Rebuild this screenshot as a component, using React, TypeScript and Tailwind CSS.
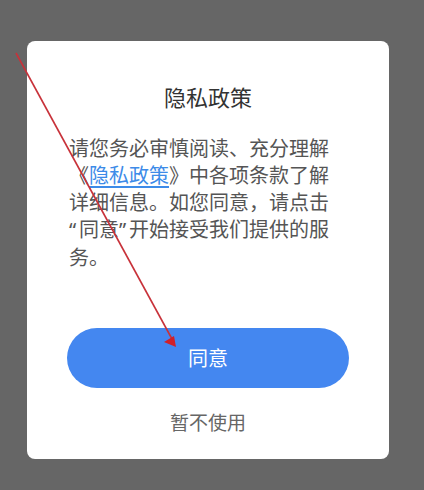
export default function App() {
    return (
        <div className="relative w-[424px] h-[490px] bg-[#666666] pt-[41px] pl-[27px] font-['Noto_Sans_CJK_SC',sans-serif] overflow-hidden">
            <div className="w-[362px] h-[418px] bg-white rounded-lg flex flex-col pt-[40px]">
                <h1 className="text-[22px] leading-[30px] text-[#333333] text-center">隐私政策</h1>
                <div className="mt-[23px] ml-[42px] w-[270px] text-[20px] leading-[27px] text-[#555555] whitespace-nowrap">
                    <p>请您务必审慎阅读、充分理解</p>
                    <p>《<span className="text-[#3d8be8] underline underline-offset-[3px]">隐私政策</span>》中各项条款了解</p>
                    <p>详细信息。如您同意，请点击</p>
                    <p>
                        <span className="font-['Noto_Sans',sans-serif] inline-block w-[10px]">“</span>同意<span className="font-['Noto_Sans',sans-serif] inline-block w-[10px]">”</span>开始接受我们提供的服
                    </p>
                    <p>务。</p>
                </div>
                <button className="mt-[58px] mx-auto w-[282px] h-[60px] rounded-full bg-[#4487f0] text-white text-[20px]">
                    同意
                </button>
                <button className="mt-[21px] text-[19px] leading-[26px] text-[#666666] text-center">
                    暂不使用
                </button>
            </div>
            {/* red arrow annotation */}
            <svg className="absolute inset-0 pointer-events-none" width="424" height="490" viewBox="0 0 424 490">
                <line x1="16" y1="53" x2="172" y2="339" stroke="#c8323a" strokeWidth="1.6" />
                <polygon points="176,347 164,342 174,336" fill="#d0202a" />
            </svg>
        </div>
    )
}
